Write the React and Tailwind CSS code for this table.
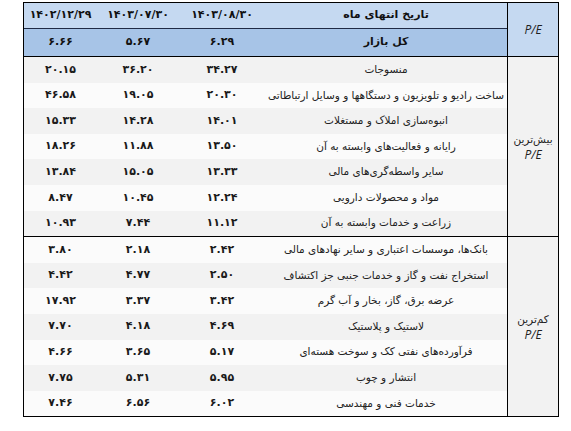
const GROUPS = [
  {
    title: 'بیش‌ترین',
    rows: [
      ['منسوجات', '۳۴.۲۷', '۳۶.۲۰', '۲۰.۱۵'],
      ['ساخت رادیو و تلویزیون و دستگاهها و وسایل ارتباطاتی', '۲۰.۳۰', '۱۹.۰۵', '۴۶.۵۸'],
      ['انبوه‌سازی املاک و مستغلات', '۱۴.۰۱', '۱۴.۲۸', '۱۵.۳۳'],
      ['رایانه و فعالیت‌های وابسته به آن', '۱۳.۵۰', '۱۱.۸۸', '۱۸.۲۶'],
      ['سایر واسطه‌گری‌های مالی', '۱۳.۳۳', '۱۵.۰۵', '۱۳.۸۴'],
      ['مواد و محصولات دارویی', '۱۲.۲۴', '۱۰.۴۵', '۸.۴۷'],
      ['زراعت و خدمات وابسته به آن', '۱۱.۱۲', '۷.۴۴', '۱۰.۹۳'],
    ],
  },
  {
    title: 'کم‌ترین',
    rows: [
      ['بانک‌ها، موسسات اعتباری و سایر نهادهای مالی', '۲.۴۲', '۲.۱۸', '۳.۸۰'],
      ['استخراج نفت و گاز و خدمات جنبی جز اکتشاف', '۲.۵۰', '۴.۷۷', '۴.۴۲'],
      ['عرضه برق، گاز، بخار و آب گرم', '۳.۴۲', '۳.۳۷', '۱۷.۹۲'],
      ['لاستیک و پلاستیک', '۴.۶۹', '۴.۱۸', '۷.۷۰'],
      ['فرآورده‌های نفتی کک و سوخت هسته‌ای', '۵.۱۷', '۳.۶۵', '۴.۶۶'],
      ['انتشار و چوب', '۵.۹۵', '۵.۳۱', '۷.۷۵'],
      ['خدمات فنی و مهندسی', '۶.۰۲', '۶.۵۶', '۷.۴۶'],
    ],
  },
];

const DATES = ['۱۴۰۳/۰۸/۳۰', '۱۴۰۳/۰۷/۳۰', '۱۴۰۲/۱۲/۲۹'];
const MARKET = ['۶.۲۹', '۵.۶۷', '۶.۶۶'];

// widths of the three number columns, right to left
const colW = i => (i === 0 ? 'w-[86px] shrink-0' : i === 1 ? 'w-[82px] shrink-0' : 'flex-1 min-w-0');

function PE() {
  return <span className="italic font-['Open_Sans',sans-serif] text-[12px] text-[#1f1f1f]">P/E</span>;
}

export default function App() {
  return (
    <div className="bg-white w-[571px] h-[431px] pt-[2px] pl-[23px] pr-[12px]" dir="rtl">
      <div className="w-[536px] border border-black font-['DejaVu_Sans',sans-serif] text-[#111]">
        {/* header */}
        <div className="flex h-[54px] border-b border-black">
          <div className="w-[51px] shrink-0 flex items-center justify-center bg-[#c5d9f1] border-l border-black">
            <PE />
          </div>
          <div className="flex-1 min-w-0 flex flex-col">
            <div className="flex h-[26px] shrink-0 bg-[#c5d9f1] border-b border-[#1f2a44]">
              <div className="w-[242px] shrink-0 flex items-center justify-center text-[11px] font-bold">تاریخ انتهای ماه</div>
              {DATES.map((d, i) => (
                <div key={d} className={`flex items-center justify-center text-[11px] font-bold ${colW(i)}`}>{d}</div>
              ))}
            </div>
            <div className="flex flex-1 bg-[#a7c4e7]">
              <div className="w-[242px] shrink-0 flex items-center justify-center text-[11px] font-bold">کل بازار</div>
              {MARKET.map((d, i) => (
                <div key={d} className={`flex items-center justify-center text-[11px] font-bold ${colW(i)}`}>{d}</div>
              ))}
            </div>
          </div>
        </div>

        {/* body */}
        {GROUPS.map((g, gi) => (
          <div key={g.title} className={`flex ${gi === 0 ? 'border-b border-black' : ''}`}>
            <div className="w-[51px] shrink-0 flex flex-col items-center justify-center bg-[#f2f2f2] border-l border-black leading-[16px]">
              <span className="text-[10.5px] text-[#222]">{g.title}</span>
              <PE />
            </div>
            <div className="flex-1 min-w-0 flex flex-col">
              {g.rows.map((r, ri) => {
                const idx = gi * 7 + ri;
                return (
                  <div key={r[0]} className={`flex h-[25.6px] ${idx % 2 === 0 ? 'bg-[#f2f2f2]' : 'bg-[#fbfbfb]'}`}>
                    <div className="w-[242px] shrink-0 flex items-center justify-center text-[10.5px] text-[#222] whitespace-nowrap">{r[0]}</div>
                    {r.slice(1).map((v, i) => (
                      <div key={i} className={`flex items-center justify-center text-[11px] font-bold text-[#1a1a1a] ${colW(i)}`}>{v}</div>
                    ))}
                  </div>
                );
              })}
            </div>
          </div>
        ))}
      </div>
    </div>
  );
}
